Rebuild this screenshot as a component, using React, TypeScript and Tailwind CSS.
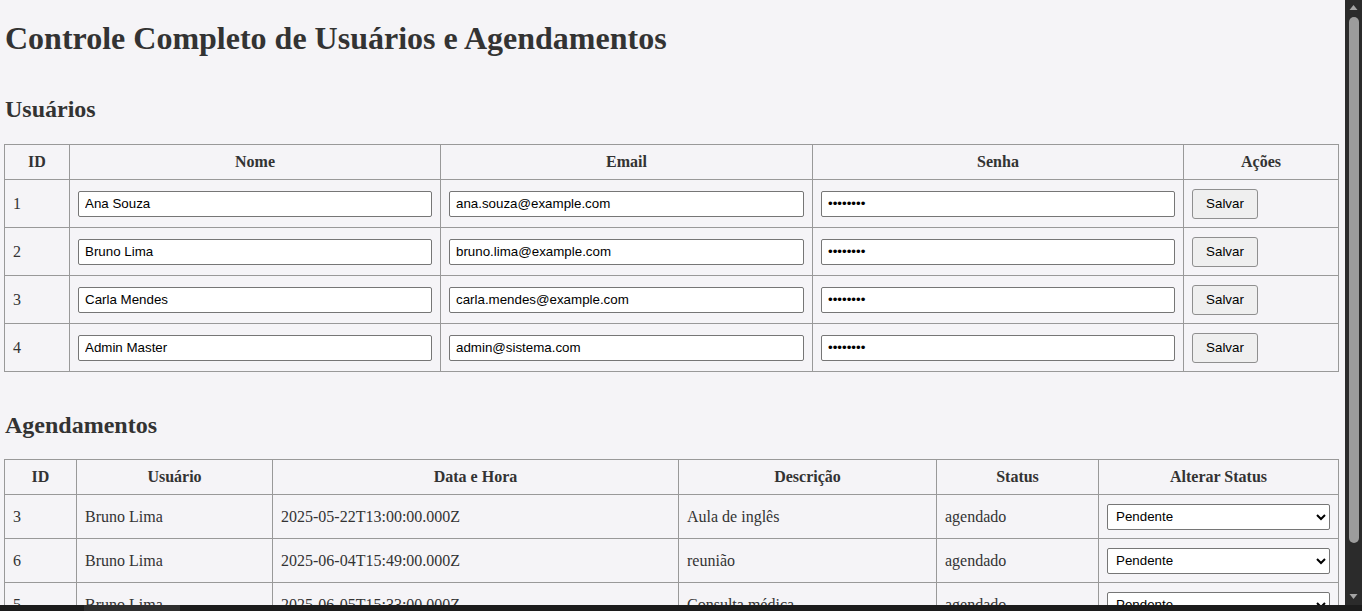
import React from "react";

const users = [
  { id: 1, nome: "Ana Souza", email: "ana.souza@example.com" },
  { id: 2, nome: "Bruno Lima", email: "bruno.lima@example.com" },
  { id: 3, nome: "Carla Mendes", email: "carla.mendes@example.com" },
  { id: 4, nome: "Admin Master", email: "admin@sistema.com" },
];

const agendamentos = [
  { id: 3, usuario: "Bruno Lima", data: "2025-05-22T13:00:00.000Z", descricao: "Aula de inglês", status: "agendado" },
  { id: 6, usuario: "Bruno Lima", data: "2025-06-04T15:49:00.000Z", descricao: "reunião", status: "agendado" },
  { id: 5, usuario: "Bruno Lima", data: "2025-06-05T15:33:00.000Z", descricao: "Consulta médica", status: "agendado" },
];

const inputCls =
  "w-full h-[26px] px-[6px] bg-white border border-[#767676] rounded-[2px] text-[13.333px] text-black font-['Liberation_Sans',Arial,sans-serif] outline-none";

function Th({ children }: { children: React.ReactNode }) {
  return (
    <th className="border border-[#999] p-0 font-bold">
      <div className="h-[34px] flex items-center justify-center">{children}</div>
    </th>
  );
}

function Td({ children, h }: { children: React.ReactNode; h: string }) {
  return (
    <td className="border border-[#999] px-2 py-0 font-normal">
      <div className={`${h} flex items-center`}>{children}</div>
    </td>
  );
}

export default function App() {
  return (
    <div className="relative flex h-[611px] w-[1362px] overflow-hidden bg-[#f5f4f7]">
      {/* Page */}
      <div className="flex-1 min-w-0 pl-[4px] pr-[6px] font-['Liberation_Serif','Times_New_Roman',serif] text-[16px] text-[#333]">
        <h1 className="mt-[20px] text-[32px] font-bold leading-[37px] pl-px">
          Controle Completo de Usuários e Agendamentos
        </h1>

        <h2 className="mt-[38px] mb-[21px] text-[24px] font-bold leading-[28px] pl-px">Usuários</h2>
        <table className="w-[1334px] table-fixed border-collapse">
          <colgroup>
            <col className="w-[65px]" />
            <col className="w-[371px]" />
            <col className="w-[372px]" />
            <col className="w-[371px]" />
            <col className="w-[155px]" />
          </colgroup>
          <thead>
            <tr>
              <Th>ID</Th>
              <Th>Nome</Th>
              <Th>Email</Th>
              <Th>Senha</Th>
              <Th>Ações</Th>
            </tr>
          </thead>
          <tbody>
            {users.map((u) => (
              <tr key={u.id}>
                <Td h="h-[47px]">{u.id}</Td>
                <Td h="h-[47px]">
                  <input className={inputCls} defaultValue={u.nome} />
                </Td>
                <Td h="h-[47px]">
                  <input className={inputCls} defaultValue={u.email} />
                </Td>
                <Td h="h-[47px]">
                  <input type="password" className={inputCls} defaultValue="12345678" />
                </Td>
                <Td h="h-[47px]">
                  <button className="h-[30px] w-[66px] bg-[#efefef] border border-[#8f8f8f] rounded-[3px] text-[13.333px] text-black font-['Liberation_Sans',Arial,sans-serif]">
                    Salvar
                  </button>
                </Td>
              </tr>
            ))}
          </tbody>
        </table>

        <h2 className="mt-[39px] mb-[20px] text-[24px] font-bold leading-[28px] pl-px">Agendamentos</h2>
        <table className="w-[1334px] table-fixed border-collapse">
          <colgroup>
            <col className="w-[72px]" />
            <col className="w-[196px]" />
            <col className="w-[406px]" />
            <col className="w-[258px]" />
            <col className="w-[162px]" />
            <col className="w-[240px]" />
          </colgroup>
          <thead>
            <tr>
              <Th>ID</Th>
              <Th>Usuário</Th>
              <Th>Data e Hora</Th>
              <Th>Descrição</Th>
              <Th>Status</Th>
              <Th>Alterar Status</Th>
            </tr>
          </thead>
          <tbody>
            {agendamentos.map((a) => (
              <tr key={a.id}>
                <Td h="h-[43px]">{a.id}</Td>
                <Td h="h-[43px]">{a.usuario}</Td>
                <Td h="h-[43px]">{a.data}</Td>
                <Td h="h-[43px]">{a.descricao}</Td>
                <Td h="h-[43px]">{a.status}</Td>
                <Td h="h-[43px]">
                  <select
                    defaultValue="pendente"
                    className="w-full h-[26px] pl-[4px] bg-white border border-[#767676] rounded-[2px] text-[13.333px] text-black font-['Liberation_Sans',Arial,sans-serif]"
                  >
                    <option value="pendente">Pendente</option>
                    <option value="agendado">Agendado</option>
                    <option value="concluido">Concluído</option>
                    <option value="cancelado">Cancelado</option>
                  </select>
                </Td>
              </tr>
            ))}
          </tbody>
        </table>
      </div>

      {/* Scrollbar */}
      <div className="w-[17px] shrink-0 bg-[#2b2b2b] flex flex-col items-center">
        <svg width="17" height="15" viewBox="0 0 17 15" className="shrink-0">
          <path d="M4.5 10 L8.5 5 L12.5 10 Z" fill="#a3a3a3" />
        </svg>
        <div className="ml-px mt-[2px] h-[526px] w-[10px] rounded-full bg-[#9c9c9c]" />
        <div className="flex-1" />
        <svg width="17" height="22" viewBox="0 0 17 22" className="shrink-0">
          <path d="M4.5 5 L12.5 5 L8.5 10 Z" fill="#a3a3a3" />
        </svg>
      </div>

      {/* Bottom bar */}
      <div className="absolute bottom-0 left-0 right-0 h-[6px] bg-[#1c1c1c] flex">
        <div className="ml-[84px] w-[96px] bg-[#2e2e2e]" />
      </div>
    </div>
  );
}
